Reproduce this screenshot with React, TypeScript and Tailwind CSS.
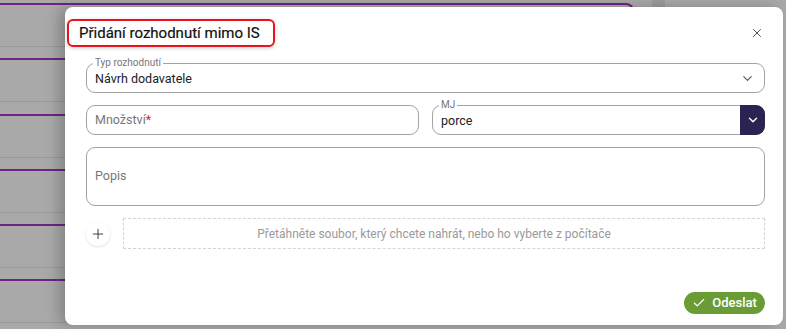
import React from "react";
import { ChevronDown, X, Plus, Check } from "lucide-react";

const font = { fontFamily: "Roboto, 'Noto Sans', sans-serif" };

function BgRow({ first }: { first?: boolean }) {
  return (
    <div
      className={
        first
          ? "h-[55.3px] shrink-0 border-t-2 border-r-2 border-[#6e2386] rounded-tr-lg"
          : "h-[55.3px] shrink-0 border-t-2 border-[#6e2386]"
      }
    >
      <div className="h-[41px]" />
      <div className="h-px bg-[#999999]" />
    </div>
  );
}

export default function App() {
  return (
    <div className="relative w-[786px] h-[329px] overflow-hidden bg-[#a9a9a9]" style={font}>
      {/* background app, dimmed */}
      <div className="flex h-full">
        <div className="flex flex-col w-[634px] pt-[3px]">
          <BgRow first />
          <BgRow />
          <BgRow />
          <BgRow />
          <BgRow />
          <BgRow />
        </div>
        <div className="w-[18px]" />
        <div className="w-[13px] h-[10px] bg-[#9c9c9c]" />
      </div>

      {/* dialog */}
      <div className="absolute left-[65px] top-[7px] w-[718px] h-[318px] rounded-lg bg-white shadow-[-6px_0_14px_rgba(0,0,0,0.22)] flex flex-col">
        <div className="flex items-start pt-[12px] pl-[2px] pr-[19px]">
          <div className="w-[208px] h-[28px] border-2 border-[#e8141b] rounded-[6px] pl-[10px] flex items-center shadow-[0_1px_4px_rgba(0,0,0,0.2)]">
            <span className="text-[15px] font-normal text-[#111] leading-none whitespace-nowrap [-webkit-text-stroke:0.2px_#111]">Přidání rozhodnutí mimo IS</span>
          </div>
          <div className="ml-auto mt-[7px]">
            <X size={14} strokeWidth={1.6} className="text-[#444]" />
          </div>
        </div>

        <div className="flex flex-col gap-[12px] pl-[21px] pr-[18px] mt-[16px]">
          {/* Typ rozhodnutí */}
          <div className="relative h-[30px] border border-[#a3a3a3] rounded-[9px] flex items-center pl-[8px] pr-[9px]">
            <span className="absolute -top-[7px] left-[6px] bg-white px-[2px] text-[10px] leading-[12px] text-[#777]">Typ rozhodnutí</span>
            <span className="text-[12.5px] text-[#222] pt-[2px]">Návrh dodavatele</span>
            <ChevronDown size={15} strokeWidth={1.8} className="ml-auto text-[#555]" />
          </div>

          {/* Množství + MJ */}
          <div className="grid grid-cols-2 gap-[13px]">
            <div className="h-[30px] border border-[#a3a3a3] rounded-[9px] flex items-center pl-[8px]">
              <span className="text-[12.5px] text-[#777]">
                Množství<span className="text-[#e0203a]">*</span>
              </span>
            </div>
            <div className="relative h-[30px] border border-[#a3a3a3] rounded-[9px] flex items-center pl-[8px]">
              <span className="absolute -top-[7px] left-[6px] bg-white px-[2px] text-[10px] leading-[12px] text-[#777]">MJ</span>
              <span className="text-[12.5px] text-[#222] pt-[2px]">porce</span>
              <div className="ml-auto -mr-px -my-px h-[30px] w-[25px] bg-[#2b2452] rounded-r-[9px] flex items-center justify-center">
                <ChevronDown size={14} strokeWidth={2.4} className="text-white" />
              </div>
            </div>
          </div>

          {/* Popis */}
          <div className="h-[59px] border border-[#a3a3a3] rounded-[9px] flex items-center pl-[8px]">
            <span className="text-[12.5px] text-[#777]">Popis</span>
          </div>

          {/* upload */}
          <div className="flex items-center gap-[13px]">
            <div className="w-[24px] h-[24px] rounded-full bg-white shadow-[0_1px_3px_rgba(0,0,0,0.12)] flex items-center justify-center">
              <Plus size={16} strokeWidth={1.4} className="text-[#333]" />
            </div>
            <div className="flex-1 h-[31px] border border-dashed border-[#d4d4d4] flex items-center justify-center pr-[20px]">
              <span className="text-[12px] text-[#9a9a9a]">Přetáhněte soubor, který chcete nahrát, nebo ho vyberte z počítače</span>
            </div>
          </div>
        </div>

        <div className="mt-auto flex justify-end pr-[18px] pb-[11px]">
          <button className="h-[22px] w-[81px] rounded-full bg-[#6a9c35] flex items-center justify-center gap-[6px] text-white text-[13px] font-medium">
            <Check size={14} strokeWidth={2} />
            <span>Odeslat</span>
          </button>
        </div>
      </div>
    </div>
  );
}
